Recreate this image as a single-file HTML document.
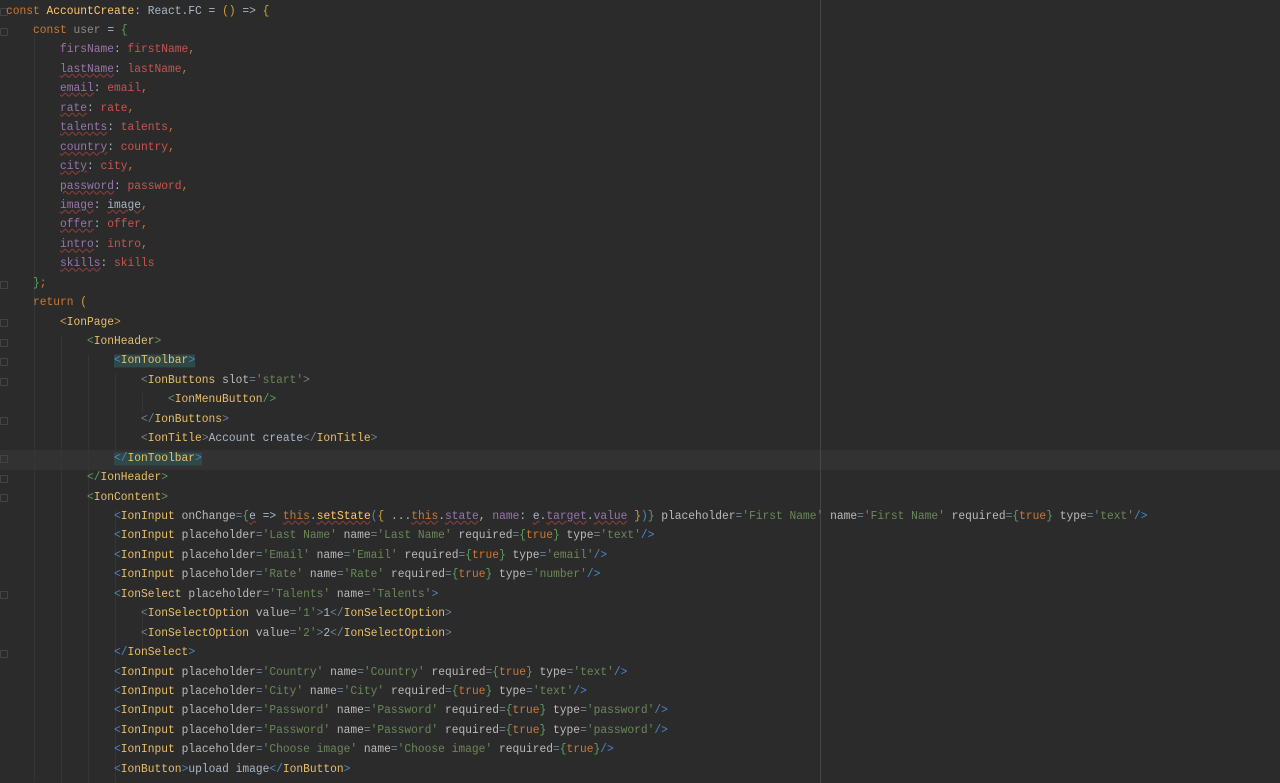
<!DOCTYPE html>
<html><head><meta charset="utf-8"><style>
html,body{margin:0;padding:0;background:#2b2b2b;width:1280px;height:783px;overflow:hidden}
.ed{position:relative;width:1280px;height:783px;font-family:"Liberation Mono",monospace;font-size:11.25px;color:#a9b7c6}
.l{position:absolute;left:6px;height:19.44px;line-height:19.44px;white-space:pre;transform:scaleY(1.08);transform-origin:left center}
.cur{position:absolute;left:0;width:1280px;top:450px;height:19.5px;background:#323232}
.mar{position:absolute;left:820px;top:0;width:1px;height:783px;background:#474747}
.ig{position:absolute;width:1px;background:#353535}
.k{color:#cc7832}.fn{color:#ffc66d}.t{color:#e8bf6a}.a{color:#bababa}.s{color:#6a8759}.p{color:#9876aa}.r{color:#c75450}
.bb{color:#4a88c7}.gb{color:#5f9e5f}.yb{color:#d0a035}.gr{color:#6f8292}
.u{text-decoration:underline wavy #8a3c3c;text-decoration-thickness:1px}
.hl{background:#2f4848}
.gut{position:absolute;left:0;width:8px;height:8px;border:1px solid #444;border-radius:1px;box-sizing:border-box}
</style></head><body><div class="ed">
<div class="cur"></div>
<div class="mar"></div>
<div class="ig" style="left:34px;top:22px;height:760px"></div>
<div class="ig" style="left:61px;top:335px;height:448px"></div>
<div class="ig" style="left:88px;top:355px;height:428px"></div>
<div class="ig" style="left:115px;top:374px;height:80px"></div>
<div class="ig" style="left:142px;top:393px;height:20px"></div>
<div class="ig" style="left:115px;top:510px;height:273px"></div>
<div class="ig" style="left:142px;top:608px;height:40px"></div>
<div class="gut" style="top:8px"></div><div class="gut" style="top:28px"></div><div class="gut" style="top:281px"></div>
<div class="gut" style="top:319px"></div><div class="gut" style="top:339px"></div><div class="gut" style="top:358px"></div><div class="gut" style="top:378px"></div><div class="gut" style="top:417px"></div><div class="gut" style="top:455px"></div><div class="gut" style="top:475px"></div><div class="gut" style="top:494px"></div><div class="gut" style="top:591px"></div><div class="gut" style="top:650px"></div>

<div class="l" style="top:2.5px"><span class="k">const</span> <span class="fn">AccountCreate</span>: React.FC = <span class="yb">()</span> =&gt; <span class="yb">{</span></div>
<div class="l" style="top:21.9px">    <span class="k">const</span> <span style="color:#8a8a8a">user</span> = <span class="gb">{</span></div>
<div class="l" style="top:41.4px">        <span class="p">firsName</span>: <span class="r">firstName</span><span class="k">,</span></div>
<div class="l" style="top:60.8px">        <span class="p u">lastName</span>: <span class="r">lastName</span><span class="k">,</span></div>
<div class="l" style="top:80.3px">        <span class="p u">email</span>: <span class="r">email</span><span class="k">,</span></div>
<div class="l" style="top:99.7px">        <span class="p u">rate</span>: <span class="r">rate</span><span class="k">,</span></div>
<div class="l" style="top:119.1px">        <span class="p u">talents</span>: <span class="r">talents</span><span class="k">,</span></div>
<div class="l" style="top:138.6px">        <span class="p u">country</span>: <span class="r">country</span><span class="k">,</span></div>
<div class="l" style="top:158px">        <span class="p u">city</span>: <span class="r">city</span><span class="k">,</span></div>
<div class="l" style="top:177.5px">        <span class="p u">password</span>: <span class="r">password</span><span class="k">,</span></div>
<div class="l" style="top:196.9px">        <span class="p u">image</span>: <span class="u">image</span><span class="k">,</span></div>
<div class="l" style="top:216.3px">        <span class="p u">offer</span>: <span class="r">offer</span><span class="k">,</span></div>
<div class="l" style="top:235.8px">        <span class="p u">intro</span>: <span class="r">intro</span><span class="k">,</span></div>
<div class="l" style="top:255.2px">        <span class="p u">skills</span>: <span class="r">skills</span></div>
<div class="l" style="top:274.7px">    <span class="gb">}</span><span class="k">;</span></div>
<div class="l" style="top:294.1px">    <span class="k">return</span> <span class="yb">(</span></div>
<div class="l" style="top:313.5px">        <span class="yb">&lt;</span><span class="t">IonPage</span><span class="yb">&gt;</span></div>
<div class="l" style="top:333px">            <span class="gb">&lt;</span><span class="t">IonHeader</span><span class="gb">&gt;</span></div>
<div class="l" style="top:352.4px">                <span class="hl"><span class="bb">&lt;</span><span class="t">IonToolbar</span><span class="bb">&gt;</span></span></div>
<div class="l" style="top:371.9px">                    <span class="gr">&lt;</span><span class="t">IonButtons</span> <span class="a">slot</span><span class="gr">=</span><span class="s">'start'</span><span class="gr">&gt;</span></div>
<div class="l" style="top:391.3px">                        <span class="gb">&lt;</span><span class="t">IonMenuButton</span><span class="gb">/&gt;</span></div>
<div class="l" style="top:410.7px">                    <span class="gr">&lt;/</span><span class="t">IonButtons</span><span class="gr">&gt;</span></div>
<div class="l" style="top:430.2px">                    <span class="gr">&lt;</span><span class="t">IonTitle</span><span class="gr">&gt;</span>Account create<span class="gr">&lt;/</span><span class="t">IonTitle</span><span class="gr">&gt;</span></div>
<div class="l" style="top:449.6px">                <span class="hl"><span class="bb">&lt;/</span><span class="t">IonToolbar</span><span class="bb">&gt;</span></span></div>
<div class="l" style="top:469.1px">            <span class="gb">&lt;/</span><span class="t">IonHeader</span><span class="gb">&gt;</span></div>
<div class="l" style="top:488.5px">            <span class="gb">&lt;</span><span class="t">IonContent</span><span class="gb">&gt;</span></div>
<div class="l" style="top:507.9px">                <span class="bb">&lt;</span><span class="t">IonInput</span> <span class="a">onChange</span><span class="gr">=</span><span class="gb">{</span><span class="u">e</span> =&gt; <span class="k u">this</span>.<span class="fn u">setState</span><span class="bb">(</span><span class="yb">{</span> ...<span class="k u">this</span>.<span class="p u">state</span>, <span class="p">name</span>: <span class="u">e</span>.<span class="p u">target</span>.<span class="p u">value</span> <span class="yb">}</span><span class="bb">)</span><span class="gb">}</span> <span class="a">placeholder</span><span class="gr">=</span><span class="s">'First Name'</span> <span class="a">name</span><span class="gr">=</span><span class="s">'First Name'</span> <span class="a">required</span><span class="gr">=</span><span class="gb">{</span><span class="k">true</span><span class="gb">}</span> <span class="a">type</span><span class="gr">=</span><span class="s">'text'</span><span class="bb">/&gt;</span></div>
<div class="l" style="top:527.4px">                <span class="bb">&lt;</span><span class="t">IonInput</span> <span class="a">placeholder</span><span class="gr">=</span><span class="s">'Last Name'</span> <span class="a">name</span><span class="gr">=</span><span class="s">'Last Name'</span> <span class="a">required</span><span class="gr">=</span><span class="gb">{</span><span class="k">true</span><span class="gb">}</span> <span class="a">type</span><span class="gr">=</span><span class="s">'text'</span><span class="bb">/&gt;</span></div>
<div class="l" style="top:546.8px">                <span class="bb">&lt;</span><span class="t">IonInput</span> <span class="a">placeholder</span><span class="gr">=</span><span class="s">'Email'</span> <span class="a">name</span><span class="gr">=</span><span class="s">'Email'</span> <span class="a">required</span><span class="gr">=</span><span class="gb">{</span><span class="k">true</span><span class="gb">}</span> <span class="a">type</span><span class="gr">=</span><span class="s">'email'</span><span class="bb">/&gt;</span></div>
<div class="l" style="top:566.3px">                <span class="bb">&lt;</span><span class="t">IonInput</span> <span class="a">placeholder</span><span class="gr">=</span><span class="s">'Rate'</span> <span class="a">name</span><span class="gr">=</span><span class="s">'Rate'</span> <span class="a">required</span><span class="gr">=</span><span class="gb">{</span><span class="k">true</span><span class="gb">}</span> <span class="a">type</span><span class="gr">=</span><span class="s">'number'</span><span class="bb">/&gt;</span></div>
<div class="l" style="top:585.7px">                <span class="bb">&lt;</span><span class="t">IonSelect</span> <span class="a">placeholder</span><span class="gr">=</span><span class="s">'Talents'</span> <span class="a">name</span><span class="gr">=</span><span class="s">'Talents'</span><span class="bb">&gt;</span></div>
<div class="l" style="top:605.1px">                    <span class="gr">&lt;</span><span class="t">IonSelectOption</span> <span class="a">value</span><span class="gr">=</span><span class="s">'1'</span><span class="gr">&gt;</span>1<span class="gr">&lt;/</span><span class="t">IonSelectOption</span><span class="gr">&gt;</span></div>
<div class="l" style="top:624.6px">                    <span class="gr">&lt;</span><span class="t">IonSelectOption</span> <span class="a">value</span><span class="gr">=</span><span class="s">'2'</span><span class="gr">&gt;</span>2<span class="gr">&lt;/</span><span class="t">IonSelectOption</span><span class="gr">&gt;</span></div>
<div class="l" style="top:644px">                <span class="bb">&lt;/</span><span class="t">IonSelect</span><span class="bb">&gt;</span></div>
<div class="l" style="top:663.5px">                <span class="bb">&lt;</span><span class="t">IonInput</span> <span class="a">placeholder</span><span class="gr">=</span><span class="s">'Country'</span> <span class="a">name</span><span class="gr">=</span><span class="s">'Country'</span> <span class="a">required</span><span class="gr">=</span><span class="gb">{</span><span class="k">true</span><span class="gb">}</span> <span class="a">type</span><span class="gr">=</span><span class="s">'text'</span><span class="bb">/&gt;</span></div>
<div class="l" style="top:682.9px">                <span class="bb">&lt;</span><span class="t">IonInput</span> <span class="a">placeholder</span><span class="gr">=</span><span class="s">'City'</span> <span class="a">name</span><span class="gr">=</span><span class="s">'City'</span> <span class="a">required</span><span class="gr">=</span><span class="gb">{</span><span class="k">true</span><span class="gb">}</span> <span class="a">type</span><span class="gr">=</span><span class="s">'text'</span><span class="bb">/&gt;</span></div>
<div class="l" style="top:702.3px">                <span class="bb">&lt;</span><span class="t">IonInput</span> <span class="a">placeholder</span><span class="gr">=</span><span class="s">'Password'</span> <span class="a">name</span><span class="gr">=</span><span class="s">'Password'</span> <span class="a">required</span><span class="gr">=</span><span class="gb">{</span><span class="k">true</span><span class="gb">}</span> <span class="a">type</span><span class="gr">=</span><span class="s">'password'</span><span class="bb">/&gt;</span></div>
<div class="l" style="top:721.8px">                <span class="bb">&lt;</span><span class="t">IonInput</span> <span class="a">placeholder</span><span class="gr">=</span><span class="s">'Password'</span> <span class="a">name</span><span class="gr">=</span><span class="s">'Password'</span> <span class="a">required</span><span class="gr">=</span><span class="gb">{</span><span class="k">true</span><span class="gb">}</span> <span class="a">type</span><span class="gr">=</span><span class="s">'password'</span><span class="bb">/&gt;</span></div>
<div class="l" style="top:741.2px">                <span class="bb">&lt;</span><span class="t">IonInput</span> <span class="a">placeholder</span><span class="gr">=</span><span class="s">'Choose image'</span> <span class="a">name</span><span class="gr">=</span><span class="s">'Choose image'</span> <span class="a">required</span><span class="gr">=</span><span class="gb">{</span><span class="k">true</span><span class="gb">}</span><span class="bb">/&gt;</span></div>
<div class="l" style="top:760.7px">                <span class="bb">&lt;</span><span class="t">IonButton</span><span class="bb">&gt;</span>upload image<span class="bb">&lt;/</span><span class="t">IonButton</span><span class="bb">&gt;</span></div>
</div></body></html>
